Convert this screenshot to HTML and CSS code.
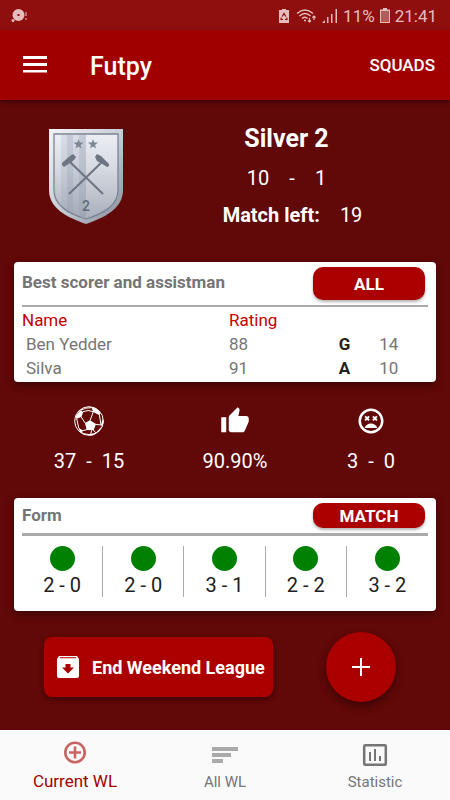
FILE: index.html
```html
<!DOCTYPE html>
<html lang="en">
<head>
	<title>Futpy</title>
	<meta charset="UTF-8">
	<meta name="viewport" content="width=device-width, initial-scale=1.0">
	<link rel="stylesheet" href="styles.css">
</head>
<body>
	<div class="status-bar">
		<svg width="16" height="16" viewBox="0 0 16 16" fill="currentColor">
			<path fill-rule="evenodd" d="M7.500 1a6 6 0 1 1 0 12a6 6 0 0 1 0-12zM6.500 6v2h2v-2z"/>
			<circle cx="2" cy="12.500" r="1.500"/>
			<path d="M14.500 4h1v4h-1zM14.500 10h1v2h-1z"/>
		</svg>
		<div class="status-right">
			<svg width="10" height="16" viewBox="0 0 10 16">
				<path fill="currentColor" d="M3 1h4v1h3v13H0V2h3z"/>
				<path d="M3.200 8.500L5 5.500l1.800 3M7.800 9.500L8 11.500H6M4 11.500H2l.3-2" fill="none" stroke="#8f0f0f" stroke-width="1.200"/>
			</svg>
			<svg class="wifi" width="21" height="16" viewBox="0 0 21 16" fill="none" stroke="currentColor" stroke-width="1.500">
				<path d="M1 5.500Q9 -1.500 17 5.500M3.500 8Q9 3 14.500 8M6 10.500Q9 8 11.500 10.500"/>
				<path d="M13.500 10v4M12 12.500l1.500 1.500 1.500-1.500M18 12V8M16.300 9.700L18 8l1.700 1.700" stroke-width="1.200"/>
				<circle cx="9" cy="12.500" r="1" fill="currentColor" stroke="none"/>
			</svg>
			<svg width="16" height="16" viewBox="0 0 16 16" fill="currentColor">
				<path d="M0 15l3-3v3zM5 9h1.500v6H5zM9 6h1.500v9H9zM13.500 1H15v14h-1.500z"/>
			</svg>
			<span>11%</span>
			<svg width="10" height="16" viewBox="0 0 10 16">
				<path fill="currentColor" d="M3 0h4v1.500h3V15H0V1.500h3z"/>
				<path fill="#b35a5a" d="M1 3h8v10H1z"/>
				<path fill="#d8502c" d="M1 13h8v1H1z"/>
			</svg>
			<span>21:41</span>
		</div>
	</div>

	<header class="toolbar">
		<button type="button" class="menu-button" aria-label="Menu">
			<svg width="24" height="18" viewBox="0 0 24 18" fill="currentColor">
				<path d="M0 0h24v3H0zM0 7h24v3H0zM0 14h24v2.500H0z"/>
			</svg>
		</button>
		<h1>Futpy</h1>
		<button type="button" class="squads-button">SQUADS</button>
	</header>

	<main>
		<section class="summary">
			<svg class="badge" width="74" height="96" viewBox="0 0 74 96">
				<defs>
					<linearGradient id="silver" x1="0" y1="0" x2="0" y2="1">
						<stop offset="0" stop-color="#eceef4"/>
						<stop offset="0.400" stop-color="#d6dae2"/>
						<stop offset="1" stop-color="#a9afbb"/>
					</linearGradient>
					<linearGradient id="rim" x1="0" y1="0" x2="1" y2="1">
						<stop offset="0" stop-color="#f4f5f8"/>
						<stop offset="0.500" stop-color="#c8cdd6"/>
						<stop offset="1" stop-color="#858d9b"/>
					</linearGradient>
					<clipPath id="inner">
						<path d="M5 5H69V61C69 76 56 84 37 90C18 84 5 76 5 61Z"/>
					</clipPath>
				</defs>
				<path fill="url(#rim)" d="M0 0H74V61C74 79 57 88 37 95C17 88 0 79 0 61Z"/>
				<path fill="url(#silver)" stroke="#7b8493" stroke-width="1.300" d="M5 5H69V61C69 76 56 84 37 90C18 84 5 76 5 61Z"/>
				<g clip-path="url(#inner)">
					<path fill="#8b98ad" opacity="0.180" d="M12 6h6v84h-6zM24 6h6v84h-6z"/>
					<path fill="#8b98ad" opacity="0.400" d="M18 6h6v84h-6zM30 6h7v84h-7z"/>
				</g>
				<path fill="#7d8694" d="M29.500 10l1.200 3.600h3.800l-3 2.300 1.100 3.700-3.100-2.200-3.100 2.200 1.100-3.700-3-2.300h3.800zM44 10l1.200 3.600H49l-3 2.300 1.100 3.700L44 17.400l-3.100 2.200 1.100-3.700-3-2.300h3.800z"/>
				<path d="M20 32L54 65M54 32L20 65" stroke="#6d7583" stroke-width="2"/>
				<path fill="#6d7583" d="M13 34l8-7 3-2 3 3-2 3-7 5-3 2-2-2zM60 35l-8-8-4-2-2 3 2 4 7 4 3 2 2-1z"/>
				<text class="badge-number" x="37" y="82" text-anchor="middle">2</text>
			</svg>
			<div class="rank">
				<h2>Silver 2</h2>
				<p class="record"><span>10</span><span>-</span><span>1</span></p>
				<p class="left"><b>Match left:</b><span>19</span></p>
			</div>
		</section>

		<section class="card">
			<div class="card-header">
				<h3>Best scorer and assistman</h3>
				<button type="button" class="pill pill-tall">ALL</button>
			</div>
			<table class="players">
				<thead>
					<tr><th class="col-name">Name</th><th class="col-rating">Rating</th><th class="col-type"></th><th></th></tr>
				</thead>
				<tbody>
					<tr><td class="player">Ben Yedder</td><td>88</td><td class="type">G</td><td>14</td></tr>
					<tr><td class="player">Silva</td><td>91</td><td class="type">A</td><td>10</td></tr>
				</tbody>
			</table>
		</section>

		<section class="stats">
			<div class="stat">
				<svg width="30" height="30" viewBox="0 0 90 90">
					<circle cx="45" cy="45" r="43" fill="none" stroke="currentColor" stroke-width="3"/>
					<path fill="currentColor" d="M33 51L48 43L66 54L59 73L38 72zM5 31L19 13L28 18L22 33L8 38zM52 4L68 8L79 21L76 28L58 18zM86 38L89 50L84 62L81 56zM14 67L24 73L27 84L18 78zM49 84L66 80L58 88L48 89z"/>
					<path fill="none" stroke="currentColor" stroke-width="3" d="M21 32L34 52M27 17Q42 10 58 17M48 44L58 17M76 26L81 57L65 55M39 71L24 74L14 66L8 37M58 72L66 81L84 62M50 85L53 73M27 83L50 86M20 13Q34 4 53 5"/>
				</svg>
				<p><span>37</span><span>-</span><span>15</span></p>
			</div>
			<div class="stat">
				<svg width="30" height="30" viewBox="0 0 24 24" fill="currentColor">
					<path d="M1 21h4V9H1v12zm22-11c0-1.100-.9-2-2-2h-6.310l.95-4.570.03-.32c0-.41-.17-.79-.44-1.060L14.170 1 7.590 7.590C7.220 7.950 7 8.450 7 9v10c0 1.100.9 2 2 2h9c.83 0 1.540-.5 1.840-1.220l3.020-7.050c.09-.23.14-.47.14-.73v-2z"/>
				</svg>
				<p>90.90%</p>
			</div>
			<div class="stat">
				<svg width="30" height="30" viewBox="0 0 24 24" fill="currentColor">
					<path d="M12 2C6.470 2 2 6.500 2 12s4.500 10 10 10 10-4.500 10-10S17.500 2 12 2m0 18a8 8 0 1 1 0-16 8 8 0 0 1 0 16m4.180-12.240l-1.060 1.060-1.060-1.060L13 8.820l1.060 1.060L13 10.940 14.060 12l1.060-1.060L16.180 12l1.060-1.060-1.060-1.060 1.060-1.060zM7.820 12l1.060-1.060L9.940 12 11 10.940 9.940 9.880 11 8.820 9.940 7.760 8.880 8.820 7.820 7.760 6.760 8.820l1.060 1.060-1.060 1.060zM12 14c-2.330 0-4.310 1.460-5.110 3.500h10.220c-.8-2.040-2.780-3.500-5.110-3.500z"/>
				</svg>
				<p><span>3</span><span>-</span><span>0</span></p>
			</div>
		</section>

		<section class="card">
			<div class="card-header card-header-thick">
				<h3>Form</h3>
				<button type="button" class="pill">MATCH</button>
			</div>
			<ul class="form">
				<li><i class="dot"></i>2 - 0</li>
				<li><i class="dot"></i>2 - 0</li>
				<li><i class="dot"></i>3 - 1</li>
				<li><i class="dot"></i>2 - 2</li>
				<li><i class="dot"></i>3 - 2</li>
			</ul>
		</section>

		<section class="actions">
			<button type="button" class="end-button">
				<svg width="24" height="24" viewBox="0 0 24 24">
					<path fill="currentColor" fill-rule="evenodd" d="M3 1h18l2 3v17q0 2-2 2H3q-2 0-2-2V4zM4 2.300L3.400 3.200h17.200L20 2.300zM9.500 9v3.500H6L12 18.500l6-6h-3.500V9z"/>
				</svg>
				End Weekend League
			</button>
			<button type="button" class="add-button" aria-label="Add match">
				<svg width="18" height="18" viewBox="0 0 18 18" fill="currentColor">
					<path d="M8 0h2v8h8v2h-8v8H8v-8H0V8h8z"/>
				</svg>
			</button>
		</section>
	</main>

	<nav class="bottom-nav">
		<a href="#" class="active">
			<svg width="26" height="26" viewBox="0 0 26 26" fill="none" stroke="currentColor">
				<circle cx="13" cy="12.500" r="9.700" stroke-width="2.600"/>
				<path d="M13 6.500v12M7 12.500h12" stroke-width="2.600"/>
			</svg>
			<span>Current WL</span>
		</a>
		<a href="#" class="all">
			<svg width="26" height="26" viewBox="0 0 26 26" fill="currentColor">
				<path d="M0 5h26v4H0zM0 11h19v4H0zM0 17h11v4H0z"/>
			</svg>
			<span>All WL</span>
		</a>
		<a href="#">
			<svg width="26" height="26" viewBox="0 0 26 26" fill="none" stroke="currentColor">
				<rect x="2.200" y="3.200" width="21.600" height="19.600" rx="1" stroke-width="2.500"/>
				<path d="M8 10v9M13 7v12M18 14v5" stroke-width="2"/>
			</svg>
			<span>Statistic</span>
		</a>
	</nav>
</body>
</html>
```
FILE: styles.css
```css
* {
	box-sizing: border-box;
}

body {
	margin: 0;
	min-height: 100vh;
	display: flex;
	flex-direction: column;
	background-color: #610808;
	color: white;
	font-family: Roboto, Arial, sans-serif;
	font-size: 20px;
}

h1, h2, h3, p, ul {
	margin: 0;
	padding: 0;
}

button {
	border: none;
	padding: 0;
	background: none;
	color: white;
	font-family: inherit;
	cursor: pointer;
}

svg {
	display: block;
	flex-shrink: 0;
}

/* top */
.status-bar {
	display: flex;
	justify-content: space-between;
	align-items: center;
	height: 30px;
	padding: 2px 13px 0 11px;
	background-color: #8f0f0f;
	color: #e6bdbd;
	font-size: 17px;
	line-height: 28px;
}

.status-right {
	display: flex;
	align-items: center;
	gap: 5px;
}

.wifi {
	margin-left: 2px;
}

.toolbar {
	display: flex;
	align-items: center;
	height: 70px;
	padding: 0 15px 0 23px;
	background-color: #a10000;
	box-shadow: 0 2px 5px rgba(0, 0, 0, 0.4);
}

.toolbar h1 {
	flex: 1;
	margin-left: 43px;
	padding-top: 2px;
	font-size: 25px;
	font-weight: 500;
}

.squads-button {
	font-size: 17px;
	font-weight: 500;
}

/* rank */
.summary {
	display: flex;
	align-items: flex-start;
	padding: 29px 42px 32px 49px;
}

.rank {
	flex: 1;
	display: flex;
	flex-direction: column;
	align-items: center;
	padding-left: 42px;
}

.rank h2 {
	font-size: 25px;
	line-height: 20px;
}

.record {
	display: flex;
	gap: 20px;
	margin-top: 17px;
	line-height: 24px;
}

.left {
	display: flex;
	gap: 20px;
	margin: 13px 0 3px;
	padding-left: 12px;
	line-height: 24px;
}

.badge-number {
	font-size: 14px;
	font-weight: 500;
	fill: #626b79;
}

/* cards */
.card {
	margin: 0 14px;
	padding: 0 8px;
	background-color: white;
	border-radius: 4px;
	color: #757575;
	font-size: 17px;
	box-shadow: 0 3px 8px rgba(0, 0, 0, 0.4);
}

.card-header {
	display: flex;
	justify-content: space-between;
	padding: 5px 3px 5px 0;
	border-bottom: 2px solid #aaa;
}

.card-header-thick {
	border-bottom-width: 3px;
}

.card-header h3 {
	padding-top: 5px;
	font-size: 17px;
	line-height: 20px;
}

.card-header-thick h3 {
	padding-top: 2px;
}

.pill {
	width: 112px;
	height: 25px;
	border-radius: 10px;
	background-color: #ab0000;
	font-size: 17px;
	font-weight: bold;
	box-shadow: 0 2px 3px rgba(0, 0, 0, 0.3);
}

.pill-tall {
	height: 33px;
}

.players {
	width: 100%;
	table-layout: fixed;
	border-collapse: collapse;
	line-height: 24px;
}

.players th,
.players td {
	padding: 0;
	text-align: left;
}

.players th {
	padding-top: 1px;
	color: #c60000;
	font-weight: normal;
}

.players tr:last-child td {
	padding-bottom: 2px;
}

.players .player {
	padding-left: 4px;
}

.players .type {
	color: #212121;
	font-weight: bold;
}

.col-name {
	width: 51%;
}

.col-rating {
	width: 27%;
}

.col-type {
	width: 10%;
}

/* stats */
.stats {
	display: grid;
	grid-template-columns: 146fr 146fr 126fr;
	padding: 24px 16px 25px;
}

.stat {
	display: flex;
	flex-direction: column;
	align-items: center;
	gap: 13px;
}

.stat p {
	display: flex;
	gap: 10px;
	line-height: 24px;
}

/* form */
.form {
	display: grid;
	grid-template-columns: repeat(5, 1fr);
	padding: 10px 0 14px;
	list-style: none;
	color: #212121;
	font-size: 20px;
}

.form li {
	display: flex;
	flex-direction: column;
	align-items: center;
	gap: 2px;
	border-right: 1px solid #aaa;
	line-height: 24px;
}

.form li:last-child {
	border-right: none;
}

.dot {
	width: 25px;
	height: 25px;
	border-radius: 50%;
	background-color: #008000;
}

/* buttons */
.actions {
	display: flex;
	justify-content: space-between;
	align-items: center;
	padding: 21px 54px 28px 44px;
}

.end-button {
	display: flex;
	align-items: center;
	gap: 12px;
	height: 60px;
	padding: 0 8px 0 12px;
	border-radius: 8px;
	background-color: #ab0000;
	font-size: 18px;
	font-weight: bold;
	box-shadow: 0 2px 5px rgba(0, 0, 0, 0.4);
}

.add-button {
	display: flex;
	align-items: center;
	justify-content: center;
	width: 70px;
	height: 70px;
	border-radius: 50%;
	background-color: #ab0000;
	box-shadow: 0 4px 8px rgba(0, 0, 0, 0.4);
}

/* bottom navigation */
.bottom-nav {
	display: grid;
	grid-template-columns: repeat(3, 1fr);
	height: 70px;
	margin-top: auto;
	background-color: #fafafa;
}

.bottom-nav a {
	display: flex;
	flex-direction: column;
	align-items: center;
	gap: 4px;
	padding-top: 12px;
	color: #757575;
	font-size: 15px;
	line-height: 20px;
	text-decoration: none;
}

.bottom-nav .active {
	gap: 5px;
	padding-top: 10px;
	color: #a10000;
	font-size: 17px;
}

.active svg {
	color: #c96464;
}

.all svg {
	color: #aaa;
}
```
